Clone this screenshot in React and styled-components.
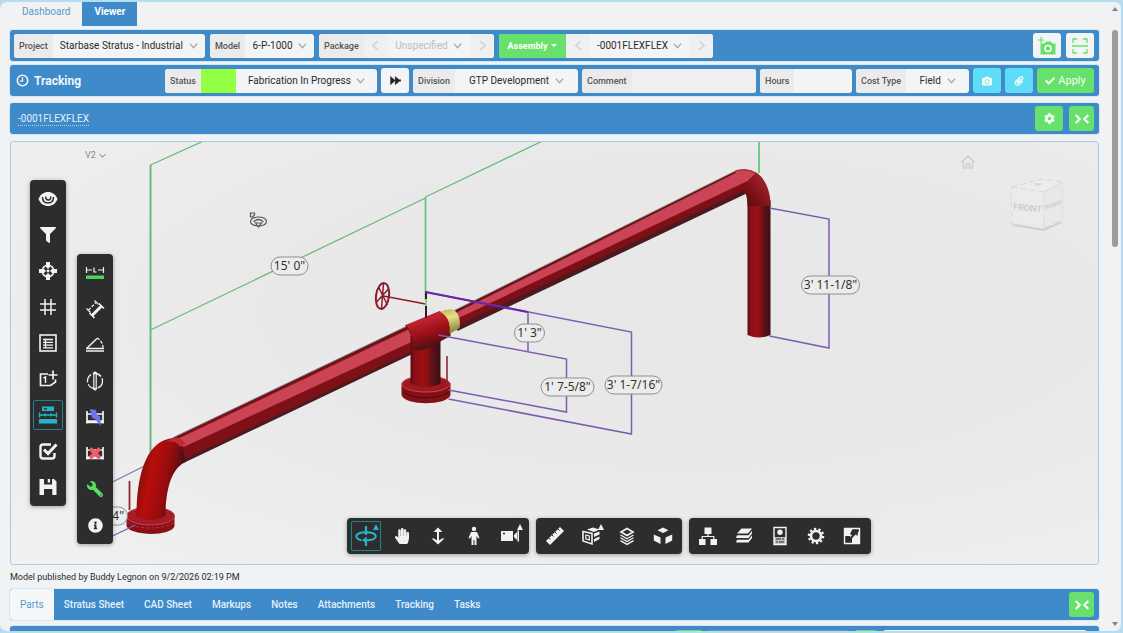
import React from "react";
import styled, { createGlobalStyle, css } from "styled-components";
import {
  FaCamera,
  FaCheck,
  FaCog,
  FaFilter,
  FaInfoCircle,
  FaPaperclip,
  FaWrench,
  FaHandPaper,
} from "react-icons/fa";

const color = {
  blue: "#3f8ac8",
  green: "#67e06c",
  cyan: "#5fdcf8",
  panel: "#f3f4f5",
  label: "#ebebec",
  toolbar: "#2d2d2e",
  active: "#25b4cc",
  edge: "#d3e8f6",
};

const GlobalStyle = createGlobalStyle`
  * { box-sizing: border-box; }
  body { margin: 0; background: #b9dcee; font-family: Roboto, "Liberation Sans", sans-serif; font-size: 10px; color: #2b2b2b; }
  button, select, input { font: inherit; color: inherit; border: 0; padding: 0; margin: 0; background: none; }
  svg { display: block; }
`;

/* ---------- page frame ---------- */

const Window = styled.div`
  display: flex;
  height: 100vh;
  overflow: hidden;
  background: #f1f2f3;
  border: 2px solid #b5dcf0;
  border-left-width: 0;
  border-radius: 8px;
`;

const Main = styled.main`
  flex: 1;
  min-width: 0;
  padding: 0 10px;
`;

const ScrollTrack = styled.div`
  display: flex;
  flex-direction: column;
  align-items: center;
  width: 12px;
  padding: 4px 0;
`;

const ScrollThumb = styled.div`
  width: 6px;
  height: 35%;
  margin: 18px 0 auto;
  border-radius: 3px;
  background: #9c9c9c;
`;

const PageTabs = styled.nav`
  display: flex;
  height: 24px;
  margin-bottom: 4px;
`;

const PageTab = styled.a`
  padding: 3px 12px 0;
  line-height: 14px;
  text-decoration: none;
  color: ${(p) => (p.$on ? "#fff" : "#5a9bc6")};
  background: ${(p) => (p.$on ? color.blue : "transparent")};
  font-weight: ${(p) => (p.$on ? 700 : 400)};
`;

const Bar = styled.section`
  display: flex;
  align-items: center;
  gap: ${(p) => p.$gap || 4}px;
  height: 31px;
  margin-bottom: ${(p) => p.$after}px;
  padding: 0 5px 0 4px;
  border-radius: 3px;
  background: ${color.blue};
  box-shadow: 0 0 0 1px ${color.edge};
`;

const Spacer = styled.div`
  flex: 1;
`;

/* ---------- fields ---------- */

const Field = styled.div`
  display: flex;
  align-items: stretch;
  width: ${(p) => (p.$width ? p.$width + "px" : "auto")};
  flex: ${(p) => (p.$grow ? "1 1 0" : "none")};
  height: 24px;
  overflow: hidden;
  border-radius: 3px;
  background: ${color.panel};
`;

const Label = styled.label`
  display: flex;
  align-items: center;
  padding: 0 5px;
  background: ${color.label};
  color: #555;
  font-size: 9px;
  font-weight: 500;
`;

const Picker = styled.div`
  flex: 1;
  display: flex;
  align-items: center;
  justify-content: center;
  gap: 5px;
  color: ${(p) => (p.$muted ? "#bdbdbf" : "#2b2b2b")};
`;

const Select = styled.select`
  appearance: none;
  outline: none;
`;

const TextInput = styled.input`
  flex: 1;
  min-width: 0;
  padding: 0 4px;
  outline: none;
  background: ${(p) => (p.$tint ? "#efeff0" : "transparent")};
`;

const StepButton = styled.button`
  width: 24px;
  display: grid;
  place-items: center;
  color: #d0d1d3;
  background: #f0f0f1;
`;

const Swatch = styled.span`
  width: 35px;
  background: #92ff42;
`;

const AssemblyButton = styled.button`
  display: flex;
  align-items: center;
  justify-content: center;
  gap: 4px;
  width: 67px;
  background: ${color.green};
  color: #fff;
  font-size: 9px;
  font-weight: 700;
`;

const Caret = styled.span`
  border: 3px solid transparent;
  border-top-color: currentColor;
  border-bottom-width: 0;
`;

const Title = styled.h2`
  display: flex;
  align-items: center;
  gap: 5px;
  width: 147px;
  margin: 0;
  padding-left: 2px;
  color: #eef6fc;
  font-size: 12px;
  font-weight: 700;
`;

const ActionButton = styled.button`
  display: flex;
  align-items: center;
  justify-content: center;
  gap: 3px;
  width: ${(p) => p.$width || 28}px;
  height: 25px;
  border-radius: 3px;
  background: ${(p) => color[p.$tone]};
  color: ${(p) => p.$ink || "#f4fff4"};
  font-size: 11px;
`;

const AssemblyLink = styled.a`
  margin-left: 4px;
  color: #e2f0fa;
  line-height: 13px;
  text-decoration: none;
  border-bottom: 1px dotted #a9d0ee;
`;

/* ---------- model viewer ---------- */

const Viewer = styled.section`
  position: relative;
  height: calc(100vh - 209px);
  overflow: hidden;
  border: 1px solid #abcbe2;
  border-radius: 3px;
  background: radial-gradient(ellipse at 62% 40%, #e7e7e7 0, #e9e9e9 45%, #f1f1f1 100%);
`;

const Scene = styled.svg`
  width: 100%;
  height: 100%;
`;

const VersionButton = styled.button`
  position: absolute;
  left: 74px;
  top: 8px;
  display: flex;
  align-items: center;
  gap: 3px;
  color: #8b8b8b;
  font-size: 9px;
`;

const toolbarSkin = css`
  display: flex;
  gap: 6px;
  border-radius: 4px;
  background: ${color.toolbar};
  box-shadow: 0 1px 4px rgba(0, 0, 0, 0.35);
`;

const SideTools = styled.div`
  ${toolbarSkin}
  position: absolute;
  left: ${(p) => p.$left}px;
  top: ${(p) => p.$top}px;
  flex-direction: column;
  padding: 4px 3px;
`;

const BottomTools = styled.div`
  position: absolute;
  left: 108px;
  right: 0;
  bottom: 10px;
  display: flex;
  justify-content: center;
  gap: 7px;
`;

const ToolGroup = styled.div`
  ${toolbarSkin}
  padding: 3px 4px;
`;

const Tool = styled.button`
  position: relative;
  display: grid;
  place-items: center;
  width: 30px;
  height: 30px;
  border-radius: 2px;
  color: ${(p) => (p.$on ? color.active : p.$ink || "#f2f2f2")};
  box-shadow: ${(p) => (p.$on ? "inset 0 0 0 1px #1d8294" : "none")};
`;

const MoreMark = styled.i`
  position: absolute;
  right: 2px;
  top: 3px;
  border: 3px solid transparent;
  border-top-width: 0;
  border-bottom: 6px solid currentColor;
`;

/* ---------- below the viewer ---------- */

const Published = styled.p`
  margin: 0;
  padding: 6px 0;
  font-size: 9px;
  line-height: 12px;
`;

const DetailBar = styled(Bar)`
  padding-left: 0;
  gap: 0;
`;

const DetailTab = styled.a`
  display: flex;
  align-items: center;
  align-self: stretch;
  padding: 0 10px;
  border-radius: 3px 0 0 3px;
  text-decoration: none;
  font-weight: ${(p) => (p.$on ? 400 : 500)};
  color: ${(p) => (p.$on ? "#5b9cc8" : "#e3f1fb")};
  background: ${(p) => (p.$on ? "#f4f6f7" : "transparent")};
`;

const FilterBar = styled(Bar)`
  align-items: flex-start;
  gap: 6px;
  padding: 4px 12px 0 96px;
`;

const FilterPiece = styled.div`
  width: ${(p) => p.$width}px;
  height: 24px;
  border-radius: 3px;
  background: ${(p) => p.$fill};
`;

/* ---------- small drawings ---------- */

const Chevron = ({ dir = "down", size = 8, ink = "#a4a6a8" }) => {
  const turn = { down: 0, left: 90, right: -90 }[dir];
  return (
    <svg width={size} height={size} viewBox="0 0 10 10" fill="none" stroke={ink} strokeWidth="1.4">
      <path d="M1 3l4 4.5L9 3" transform={`rotate(${turn} 5 5)`} />
    </svg>
  );
};

const Glyph = ({ size = 20, children }) => (
  <svg width={size} height={size} viewBox="0 0 20 20" fill="none" stroke="currentColor" strokeWidth="1.5">
    {children}
  </svg>
);

const Collapse = () => (
  <Glyph size={18}>
    <path d="M3 5.5L7.5 10L3 14.5M17 5.5L12.5 10L17 14.5" strokeWidth="2.4" />
  </Glyph>
);

const ScrollArrow = ({ up }) => (
  <svg width="8" height="6" viewBox="0 0 8 6" fill="#858585">
    <path d={up ? "M4 1L7 5H1z" : "M4 5L7 1H1z"} />
  </svg>
);

const Advance = () => (
  <Glyph size={11}>
    <path d="M1 2.500L9.500 10 1 17.500zM9.500 2.500L17 9V8.500H19.500V11.500H17L9.500 17.500z" fill="currentColor" strokeWidth=".8" />
  </Glyph>
);

const CameraPlus = () => (
  <Glyph>
    <path d="M3.500 7.500h4l1.500-2h5l1.300 2h3.200v11h-15z" fill="currentColor" stroke="none" />
    <circle cx="11" cy="12.500" r="3" stroke="#fff" strokeWidth="1.600" />
    <path d="M4 1v6M1 4h6" strokeWidth="1.200" />
  </Glyph>
);

const ScanFrame = () => (
  <Glyph>
    <path d="M3 7V3h4M13 3h4v4M17 13v4h-4M7 17H3v-4M2 10h16" strokeWidth="1.3" />
  </Glyph>
);

const Clock = () => (
  <Glyph size={13}>
    <circle cx="10" cy="10" r="8" strokeWidth="2.4" />
    <path d="M10 5v6H6" strokeWidth="2" />
  </Glyph>
);

const Eye = () => (
  <Glyph>
    <path d="M.5 10C2.500 5 6 3 10 3S17.500 5 19.500 10C17.500 15 14 17 10 17S2.500 15 .5 10z" fill="currentColor" stroke="none" />
    <path d="M4.500 8c0 4 2.500 6 5.500 6s5.500-2 5.500-6" stroke="#2d2d2e" strokeWidth="1.500" />
    <path d="M8 7.500a2.500 2.500 0 1 0 4.500 0" stroke="#2d2d2e" strokeWidth="1.500" />
  </Glyph>
);

const Target = () => (
  <Glyph>
    <circle cx="10" cy="10" r="5.800" strokeWidth="1.600" />
    <path d="M8 1h4v5l-2 2-2-2zM8 19h4v-5l-2-2-2 2zM1 8v4h5l2-2-2-2zM19 8v4h-5l-2-2 2-2z" fill="currentColor" stroke="none" />
    <circle cx="10" cy="10" r="1.400" fill="currentColor" stroke="none" />
  </Glyph>
);

const Grid = () => (
  <Glyph>
    <path d="M7 2v16M13 2v16M2 7h16M2 13h16" />
  </Glyph>
);

const Sheet = () => (
  <Glyph>
    <rect x="2" y="2" width="16" height="16" strokeWidth="1.600" />
    <path d="M5 6.500h10M5 9.300h10M5 12.100h10M5 14.900h10M7.500 5.500v10" strokeWidth="1.300" />
  </Glyph>
);

const AddItem = () => (
  <Glyph>
    <path d="M10 5H2.500v11.500h10L17.500 13v-2.500M15 1.500v9M10.500 6h9" strokeWidth="1.700" />
    <path d="M5.500 9L7.500 8v6" strokeWidth="1.500" />
  </Glyph>
);

const MeasureSet = () => (
  <Glyph>
    <path d="M4 1.500h12v4.500H4z" fill="currentColor" stroke="none" />
    <path d="M6 3.800h3" stroke="#2d2d2e" />
    <path d="M1.500 7.500v5M18.500 7.500v5M2 10h16M7 8.500v3M13 8.500v3" strokeWidth="1.300" />
    <path d="M1 14h18v4.500H1z" fill="currentColor" stroke="none" />
  </Glyph>
);

const CheckBoxMark = () => (
  <Glyph>
    <path d="M13 3.500H5A2.500 2.500 0 0 0 2.500 6v9A2.500 2.500 0 0 0 5 17.500h9a2.500 2.500 0 0 0 2.500-2.500v-3" strokeWidth="2.400" />
    <path d="M6 8.500l4 4 8.500-9" strokeWidth="3" />
  </Glyph>
);

const Floppy = () => (
  <Glyph>
    <path d="M1.500 2H16l2.500 2.500V18h-4.200v-6H6v6H1.500zM6 2v5.500h8V2h-2v3.500h-2.200V2z" fill="currentColor" fillRule="evenodd" stroke="none" />
  </Glyph>
);

const LengthMark = () => (
  <Glyph>
    <path d="M1.500 4v6M18.500 4v6M2 7h5M13 7h5M9 4.500V9h2.500" strokeWidth="1.200" />
    <path d="M1 12.500h18v3.500H1z" fill="#4bd35e" stroke="none" />
  </Glyph>
);

const DiagonalMeasure = () => (
  <Glyph>
    <path d="M7 16.500L16.500 7" strokeWidth="3" />
    <path d="M3.500 11L11 3.500" strokeWidth="1.300" strokeDasharray="3 1.500" />
    <path d="M1.500 9.500l4 4M9.500 1.500l4 4" strokeWidth="1.200" />
    <path d="M4.500 14l5 5M14 4.500l5 5" strokeWidth="1.600" />
  </Glyph>
);

const AngleMark = () => (
  <Glyph>
    <path d="M2 13L12 3.500M1 16h18M1 13.500h18" strokeWidth="1.500" />
    <path d="M12 3c4 2 6 6 6 10" strokeWidth="1.300" strokeDasharray="3 1.500" />
  </Glyph>
);

const DiameterMark = () => (
  <Glyph>
    <circle cx="10" cy="10" r="7.500" strokeWidth="1.300" strokeDasharray="9 2" />
    <path d="M8.800 1.500v17M11.200 1.500v17M8 2.500l2-1.500 2 1.500M8 17.500l2 1.500 2-1.500" strokeWidth="1.200" />
  </Glyph>
);

const Spool = ({ children }) => (
  <Glyph>
    <path d="M2 4v12.500M18 4v12.500M2 7h16M2 14h16M1 15.500h18" strokeWidth="1.700" />
    {children}
  </Glyph>
);

const Orbit = () => (
  <Glyph size={22}>
    <path d="M10 1v8M10 14v5" strokeWidth="2" />
    <path d="M6 14c-3-.8-4.800-2-4.800-3.800C1.200 8 5 6.500 10 6.500s8.800 1.500 8.800 3.700S15 13.800 10 13.800H8" strokeWidth="1.800" />
    <path d="M10.500 10.500L6.500 13.800l4 3z" fill="currentColor" stroke="none" />
  </Glyph>
);

const Dolly = () => (
  <Glyph>
    <path d="M10 3v14" strokeWidth="2" />
    <path d="M10 1.500L14.500 6H5.500zM3.500 12.500h2.500L10 15l4-2.500h2.500L10 18.500z" fill="currentColor" stroke="none" />
  </Glyph>
);

const Person = () => (
  <Glyph>
    <circle cx="10" cy="3" r="2.200" fill="currentColor" stroke="none" />
    <path d="M7 6h6l2.500 6-1.300.6L12.500 10v9h-2v-5h-1v5h-2v-9l-1.700 2.600-1.300-.6z" fill="currentColor" stroke="none" />
  </Glyph>
);

const VideoCam = () => (
  <Glyph>
    <path d="M1 5h12v10H1zM14 9l3-3v8l-3-3zM17.500 4.500h1.500v11h-1.500z" fill="currentColor" stroke="none" />
    <path d="M3 7.500h2" stroke="#2d2d2e" />
  </Glyph>
);

const Ruler = () => (
  <Glyph>
    <path d="M1 15L15 1l4 4L5 19z" fill="currentColor" stroke="none" />
    <path d="M4 12l1.500 1.500M7 9l1.500 1.500M10 6l1.500 1.500M13 3l1.500 1.500" stroke="#2d2d2e" strokeWidth="1" />
  </Glyph>
);

const SectionBox = () => (
  <Glyph>
    <path d="M6 3.500L12 1.500 18.500 3.500 13 6z" fill="currentColor" stroke="none" />
    <path d="M2 5.500l9 2v10.500l-9-3z" strokeWidth="1.600" />
    <path d="M4.800 9l3.500 1v4l-3.500-1.200z" strokeWidth="1.200" />
    <path d="M13 7.500l5.500-2v3l-5.500 2.500zM13 13l5.500-2.500v2.500L13 16z" fill="currentColor" stroke="none" />
  </Glyph>
);

const Layers = () => (
  <Glyph>
    <path d="M10 2.500L16 6l-6 3.500L4 6z" strokeWidth="1.700" />
    <path d="M3.500 9l6.500 3.800L16.500 9M3.500 11.800l6.500 3.800 6.500-3.800M3.500 14.600l6.500 3.800 6.500-3.800" strokeWidth="1.300" />
  </Glyph>
);

const Explode = () => (
  <Glyph>
    <path d="M10 1.500l5.500 2.800L10 7 4.500 4.300zM.8 8.500l6.700 3v6.500l-6.700-3.500zM19.200 8.500l-6.700 3v6.500l6.700-3.500z" fill="currentColor" stroke="none" />
  </Glyph>
);

const Tree = () => (
  <Glyph>
    <path d="M6.500 1.500h7v6.500h-7zM1 13h6.500v6H1zM12.500 13H19v6h-6.500z" fill="currentColor" stroke="none" />
    <path d="M10 8v3M4.200 13v-2.500h11.600V13" strokeWidth="1.200" />
  </Glyph>
);

const Stack = () => (
  <Glyph>
    <path d="M7.500 2.500H18L14 7.500H3z" fill="currentColor" stroke="none" />
    <path d="M3 9.200h11.500L18 4.800v2.700l-3.500 4.500H2zM3 13.700h11.500L18 9.300V12l-3.500 4.500H2z" fill="currentColor" stroke="none" />
  </Glyph>
);

const Properties = () => (
  <Glyph>
    <path d="M4 1.500h12v17H4z" strokeWidth="1.400" />
    <path d="M4 11h12v7H4z" fill="currentColor" fillOpacity=".75" stroke="none" />
    <circle cx="10" cy="6.300" r="2.700" fill="currentColor" stroke="none" />
    <path d="M6 13h5M12 13h2M6 16h2M9 16h5" stroke="#2d2d2e" strokeWidth="1.200" />
  </Glyph>
);

const Gear = () => (
  <Glyph>
    <circle cx="10" cy="10" r="5" strokeWidth="2.600" />
    <circle cx="10" cy="10" r="7.200" strokeWidth="2.200" strokeDasharray="2.300 2.220" />
  </Glyph>
);

const Expand = () => (
  <Glyph>
    <path d="M2.500 2.500h15v15h-15z" strokeWidth="1.400" />
    <path d="M2.500 10H8v2l2.500-2.500L8 8l3-6h-8zM10 17.500V12l7.500-7v12.500z" fill="currentColor" stroke="none" />
    <path d="M7 13.500L15 5M10.500 5H15v4.500" stroke="#2d2d2e" strokeWidth="1.500" />
  </Glyph>
);

const Dimension = ({ x, y, w, text }) => (
  <g>
    <rect x={x - w / 2} y={y - 9} width={w} height="18" rx="9" fill="#ececec" stroke="#8f8f8f" />
    <text x={x} y={y + 4} textAnchor="middle" fill="#33332b">
      {text}
    </text>
  </g>
);

const PipeScene = () => (
  <Scene viewBox="11 142 1088 422" preserveAspectRatio="xMidYMid slice" role="img" aria-label="Pipe spool model">
    <defs>
      <linearGradient id="upright" x1="0" x2="1" y1="0" y2="0">
        <stop offset="0" stopColor="#5e0b10" />
        <stop offset=".15" stopColor="#8c1017" />
        <stop offset=".45" stopColor="#9a0f13" />
        <stop offset=".62" stopColor="#7d1014" />
        <stop offset=".72" stopColor="#5c1218" />
        <stop offset="1" stopColor="#3d0d13" />
      </linearGradient>
      <linearGradient id="bend" x1="0" x2="1" y1="0" y2=".35">
        <stop offset="0" stopColor="#5a1014" />
        <stop offset=".4" stopColor="#b80d0b" />
        <stop offset=".7" stopColor="#960c0e" />
        <stop offset="1" stopColor="#3c1014" />
      </linearGradient>
      <linearGradient id="elbow" x1="1" x2="0" y1="0" y2=".9">
        <stop offset="0" stopColor="#8a3a40" />
        <stop offset=".3" stopColor="#97202a" />
        <stop offset=".65" stopColor="#7c0f14" />
        <stop offset="1" stopColor="#3a1216" />
      </linearGradient>
      <linearGradient id="sleeve" x1="0" x2=".35" y1="0" y2="1">
        <stop offset="0" stopColor="#8c3038" />
        <stop offset=".3" stopColor="#c02432" />
        <stop offset=".65" stopColor="#9c0f16" />
        <stop offset="1" stopColor="#4a1014" />
      </linearGradient>
      <linearGradient id="band" x1="0" x2=".2" y1="0" y2="1">
        <stop offset="0" stopColor="#b9b559" />
        <stop offset=".4" stopColor="#e6df86" />
        <stop offset="1" stopColor="#8c8640" />
      </linearGradient>
    </defs>

    <g fill="none" stroke="#69ba7b" strokeWidth="1.300">
      <path d="M151 165L204 141M151 330L426 198M426 197L543 141" />
      <path d="M151 165V462" strokeWidth="2" />
      <path d="M426 197V300M759.500 141V173" strokeWidth="1.600" stroke="#55c46c" />
    </g>

    <path d="M113 482L151 463" stroke="#8077b5" strokeWidth="1.300" />

    {/* run to the upper right */}
    <path d="M448 314L738 170L754 184L746 194L458 331z" fill="#4a1a1f" />
    <path d="M448 316L738 172L754 178L747 189L457 326z" fill="#7f0f17" />
    <path d="M448 317L738 172L754 174L748 181L455 320z" fill="#cb4455" />
    <path d="M448 314L738 170" stroke="#9a6268" strokeWidth="1" />

    {/* upper elbow and drop */}
    <path d="M748 200H771V335Q759.500 340 748 335z" fill="url(#upright)" />
    <path d="M738 170C746 168 756 170 762 177C769 186 771 195 771 206H748Q748 197 745 191L748 181L754 174z" fill="url(#elbow)" />
    <path d="M736 171Q746 168 756 173L748 181L738 181z" fill="#cb4455" />
    <path d="M736 171Q746 168 756 173" stroke="#a5303a" fill="none" />

    {/* run to the lower left */}
    <path d="M173 438L410 325L415 353L184 463z" fill="#4a1c20" />
    <path d="M174 439L410 327L415 350L183 460z" fill="#7f1017" />
    <path d="M176 440L410 329L414 341L184 447z" fill="#cb4455" />
    <path d="M173 438L410 325" stroke="#9a6268" strokeWidth="1" />

    {/* lower elbow and flange */}
    <path d="M127 516V526C130 536 172 537 175 526V516z" fill="#8d0f16" />
    <ellipse cx="151" cy="516" rx="24" ry="9" fill="#a51c26" stroke="#c24550" strokeWidth="1" />
    <path d="M128 522C134 530 168 530 174 522" stroke="#b4363e" fill="none" strokeDasharray="3 2" />
    <path d="M137 516C137 472 148 440 174 438Q184 440 186 462C172 468 166 490 166 516Q151 524 137 516z" fill="url(#bend)" />
    <path d="M174 438Q181 436 186 444L181 447Q176 440 166 442z" fill="#bc2a33" />
    <path d="M130 481V510" stroke="#8f2630" strokeWidth="1.800" />

    {/* tee branch and flange */}
    <path d="M402 383V395C405 406 448 406 451 395V383z" fill="#860e15" />
    <ellipse cx="426.500" cy="384" rx="24" ry="8" fill="#9e1822" stroke="#c74954" strokeWidth="1" />
    <path d="M403 391C410 400 443 400 450 391" stroke="#3f0d11" fill="none" />
    <path d="M411 336H441V384Q426 390 411 384z" fill="url(#upright)" />
    <path d="M447.500 356V384" stroke="#8f2630" strokeWidth="1.600" />
    <path d="M406 325L440 311Q452 316 451 336L436 344Q423 352 414 350Q414 334 406 325z" fill="url(#sleeve)" />
    <path d="M441 312Q448 308 455 310Q462 317 460 328L450 334Q452 318 441 312z" fill="url(#band)" />
    <path d="M406 325Q414 334 414 350" stroke="#6b1218" fill="none" />

    {/* hand wheel */}
    <g fill="none" stroke="#8c1c2c" strokeWidth="1.500">
      <ellipse cx="383" cy="296" rx="6.500" ry="13" transform="rotate(8 383 296)" strokeWidth="2" />
      <path d="M377 302L389 289M379 287L388 305M384 284L382 308M384 296L426 304" />
    </g>
    <path d="M426.500 291V318" stroke="#451030" strokeWidth="2" />
    <path d="M426.500 299V306" stroke="#8bd07b" strokeWidth="2" />

    <g fill="none" stroke="#7e5cae" strokeWidth="1.500">
      <path d="M426 292L632 332V434L449 399" />
      <path d="M528.500 311V351M439 335L567 359V412L449 390" />
      <path d="M426 292L528 312" strokeWidth="2.200" stroke="#6a26a8" />
      <path d="M770 208L829.500 219V348L770 336" />
      <path d="M113 536L136 525" strokeWidth="1.300" />
    </g>

    <g fontFamily='"Noto Sans", sans-serif' fontSize="12">
      <Dimension x={290} y={266} w={37} text={`15' 0"`} />
      <Dimension x={530} y={333} w={30} text={`1' 3"`} />
      <Dimension x={568} y={387} w={53} text={`1' 7-5/8"`} />
      <Dimension x={634} y={385} w={57} text={`3' 1-7/16"`} />
      <Dimension x={831} y={285} w={58} text={`3' 11-1/8"`} />
      <Dimension x={113} y={516} w={30} text={`1/4"`} />
    </g>

    {/* orbit pointer */}
    <g fill="none" stroke="#555" strokeWidth="1.200">
      <path d="M251 217V213h4v2l-2 2z" />
      <ellipse cx="259" cy="221.500" rx="8" ry="4.500" />
      <path d="M254 222Q259 217 264 222M256 223l3 4 3-4z" />
    </g>

    {/* view cube */}
    <g fill="none" stroke="#cfcfcf">
      <path d="M962 162.500L968.500 156L975 162.500M964 162V168H967V164H970V168H973V162" strokeWidth="1.500" />
      <path d="M1012 187L1043 179L1063 182L1044 192z" fill="#ececec" stroke="#d6d6d6" strokeDasharray="6 3" />
      <path d="M1012 187L1044 192V229L1012 223z" fill="#ebebeb" stroke="#dadada" strokeDasharray="6 3" />
      <path d="M1044 192L1063 182V219L1044 229z" fill="#e8e8e8" stroke="#dadada" strokeDasharray="6 3" />
      <path d="M1013 225L1044 230L1062 222" strokeWidth="2" />
    </g>
    <g fill="#c9c9c9" fontFamily="Roboto, sans-serif" fontWeight="500" textAnchor="middle">
      <text x="1028" y="211" fontSize="9" transform="rotate(6 1028 208)">FRONT</text>
      <text x="1054" y="207" fontSize="6" transform="rotate(-20 1054 205)">RIGHT</text>
      <text x="1038" y="186" fontSize="4">TOP</text>
    </g>
  </Scene>
);

/* ---------- assembled pieces ---------- */

const SelectField = ({ id, label, value, width, muted, swatch, steps }) => (
  <Field $width={width}>
    {label && <Label htmlFor={id}>{label}</Label>}
    {swatch && <Swatch />}
    {steps && (
      <StepButton aria-label="Previous">
        <Chevron dir="left" size={11} ink="#d2d3d5" />
      </StepButton>
    )}
    <Picker $muted={muted}>
      <Select id={id} defaultValue={value}>
        <option>{value}</option>
      </Select>
      <Chevron size={9} />
    </Picker>
    {steps && (
      <StepButton aria-label="Next">
        <Chevron dir="right" size={11} ink="#d2d3d5" />
      </StepButton>
    )}
  </Field>
);

const ToolButton = ({ tool }) => (
  <Tool aria-label={tool.name} $on={tool.on} $ink={tool.ink}>
    {tool.icon}
    {tool.more && <MoreMark />}
  </Tool>
);

const MirroredWrench = styled(FaWrench)`
  transform: scaleX(-1);
`;

const mainTools = [
  { name: "Visibility", icon: <Eye /> },
  { name: "Filter", icon: <FaFilter size={16} /> },
  { name: "Focus", icon: <Target /> },
  { name: "Grid", icon: <Grid /> },
  { name: "List", icon: <Sheet /> },
  { name: "Add item", icon: <AddItem /> },
  { name: "Dimensions", icon: <MeasureSet />, on: true },
  { name: "Select", icon: <CheckBoxMark /> },
  { name: "Save", icon: <Floppy /> },
];

const dimensionTools = [
  { name: "Length", icon: <LengthMark /> },
  { name: "Point to point", icon: <DiagonalMeasure /> },
  { name: "Angle", icon: <AngleMark /> },
  { name: "Diameter", icon: <DiameterMark /> },
  {
    name: "Auto dimension",
    icon: (
      <Spool>
        <path d="M5 2l6 1 1 5 3 1 1 10-6-7-3-1z" fill="#6e74ea" stroke="none" />
      </Spool>
    ),
  },
  {
    name: "Clear dimensions",
    icon: (
      <Spool>
        <path d="M5 5.500l10 9.500M15 5.500L5 15" stroke="#f05a6b" strokeWidth="4" />
      </Spool>
    ),
  },
  { name: "Settings", icon: <MirroredWrench size={16} />, ink: "#55e05f" },
  { name: "Info", icon: <FaInfoCircle size={15} /> },
];

const viewTools = [
  [
    { name: "Orbit", icon: <Orbit />, on: true, more: true },
    { name: "Pan", icon: <FaHandPaper size={16} /> },
    { name: "Zoom", icon: <Dolly /> },
    { name: "First person", icon: <Person /> },
    { name: "Camera", icon: <VideoCam />, more: true },
  ],
  [
    { name: "Measure", icon: <Ruler /> },
    { name: "Section", icon: <SectionBox />, more: true },
    { name: "Levels", icon: <Layers /> },
    { name: "Explode", icon: <Explode /> },
  ],
  [
    { name: "Model browser", icon: <Tree /> },
    { name: "Sheets", icon: <Stack /> },
    { name: "Properties", icon: <Properties /> },
    { name: "Viewer settings", icon: <Gear /> },
    { name: "Full screen", icon: <Expand /> },
  ],
];

const detailTabs = ["Parts", "Stratus Sheet", "CAD Sheet", "Markups", "Notes", "Attachments", "Tracking", "Tasks"];

export default function App() {
  return (
    <Window>
      <GlobalStyle />
      <Main>
        <PageTabs>
          <PageTab href="#dashboard">Dashboard</PageTab>
          <PageTab href="#viewer" $on>
            Viewer
          </PageTab>
        </PageTabs>

        <Bar $gap={5} $after={4}>
          <SelectField id="project" label="Project" value="Starbase Stratus - Industrial" width={191} />
          <SelectField id="model" label="Model" value="6-P-1000" width={104} />
          <SelectField id="package" label="Package" value="Unspecified" width={175} muted steps />
          <Field $width={214}>
            <AssemblyButton>
              Assembly <Caret />
            </AssemblyButton>
            <StepButton aria-label="Previous assembly">
              <Chevron dir="left" size={11} ink="#d2d3d5" />
            </StepButton>
            <Picker>
              <Select aria-label="Assembly" defaultValue="-0001FLEXFLEX">
                <option>-0001FLEXFLEX</option>
              </Select>
              <Chevron size={9} />
            </Picker>
            <StepButton aria-label="Next assembly">
              <Chevron dir="right" size={11} ink="#d2d3d5" />
            </StepButton>
          </Field>
          <Spacer />
          <ActionButton $tone="panel" $ink={color.green} aria-label="Add photo">
            <CameraPlus />
          </ActionButton>
          <ActionButton $tone="panel" $ink={color.green} aria-label="Scan">
            <ScanFrame />
          </ActionButton>
        </Bar>

        <Bar $after={7}>
          <Title>
            <Clock />
            Tracking
          </Title>
          <SelectField id="status" label="Status" value="Fabrication In Progress" width={212} swatch />
          <ActionButton $tone="panel" $ink="#222" aria-label="Advance status">
            <Advance />
          </ActionButton>
          <SelectField id="division" label="Division" value="GTP Development" width={165} />
          <Field $grow>
            <Label htmlFor="comment">Comment</Label>
            <TextInput id="comment" $tint />
          </Field>
          <Field $width={92}>
            <Label htmlFor="hours">Hours</Label>
            <TextInput id="hours" />
          </Field>
          <SelectField id="cost" label="Cost Type" value="Field" width={113} />
          <ActionButton $tone="cyan" aria-label="Photos">
            <FaCamera size={10} />
          </ActionButton>
          <ActionButton $tone="cyan" aria-label="Attach">
            <FaPaperclip size={10} />
          </ActionButton>
          <ActionButton $tone="green" $width={57}>
            <FaCheck size={10} /> Apply
          </ActionButton>
        </Bar>

        <Bar $gap={6} $after={7}>
          <AssemblyLink href="#assembly">-0001FLEXFLEX</AssemblyLink>
          <Spacer />
          <ActionButton $tone="green" aria-label="Viewer options">
            <FaCog size={11} />
          </ActionButton>
          <ActionButton $tone="green" $width={25} aria-label="Collapse viewer">
            <Collapse />
          </ActionButton>
        </Bar>

        <Viewer>
          <PipeScene />
          <VersionButton>
            V2 <Chevron size={7} ink="#777" />
          </VersionButton>
          <SideTools $left={19} $top={38}>
            {mainTools.map((tool) => (
              <ToolButton key={tool.name} tool={tool} />
            ))}
          </SideTools>
          <SideTools $left={66} $top={112}>
            {dimensionTools.map((tool) => (
              <ToolButton key={tool.name} tool={tool} />
            ))}
          </SideTools>
          <BottomTools>
            {viewTools.map((group) => (
              <ToolGroup key={group[0].name}>
                {group.map((tool) => (
                  <ToolButton key={tool.name} tool={tool} />
                ))}
              </ToolGroup>
            ))}
          </BottomTools>
        </Viewer>

        <Published>Model published by Buddy Legnon on 9/2/2026 02:19 PM</Published>

        <DetailBar $after={6}>
          {detailTabs.map((name, i) => (
            <DetailTab key={name} href={"#" + name} $on={i === 0}>
              {name}
            </DetailTab>
          ))}
          <Spacer />
          <ActionButton $tone="green" $width={25} aria-label="Collapse details">
            <Collapse />
          </ActionButton>
        </DetailBar>

        <FilterBar $after={0}>
          <Spacer />
          <FilterPiece $width={28} $fill={color.green} />
          <FilterPiece $width={140} $fill="#5f9fd2" />
          <FilterPiece $width={22} $fill={color.green} />
          <FilterPiece $width={204} $fill={color.panel} />
        </FilterBar>
      </Main>
      <ScrollTrack>
        <ScrollArrow up />
        <ScrollThumb />
        <ScrollArrow />
      </ScrollTrack>
    </Window>
  );
}
